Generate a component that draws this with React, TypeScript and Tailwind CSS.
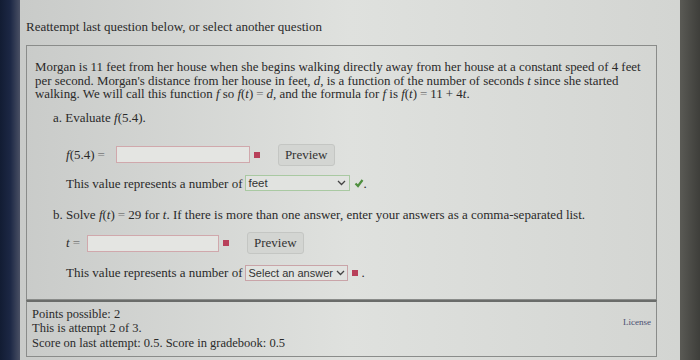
import React from "react";

const serif = { fontFamily: '"Liberation Serif", "Times New Roman", serif' };
const sans = { fontFamily: '"Liberation Sans", Arial, sans-serif' };

function Req() {
  return <span className="mx-[4px] inline-block h-[6px] w-[6px] bg-[#b8405a]" />;
}

function Check() {
  return (
    <svg width="10" height="10" viewBox="0 0 10 10" className="ml-[4px] inline-block">
      <path d="M1.5 5.5 L4 8 L8.5 2" fill="none" stroke="#4f8f3f" strokeWidth="2.2" />
    </svg>
  );
}

function Chevron() {
  return (
    <svg width="9" height="6" viewBox="0 0 9 6" className="shrink-0">
      <path d="M1 1 L4.5 4.5 L8 1" fill="none" stroke="#444" strokeWidth="1.3" />
    </svg>
  );
}

function PreviewButton() {
  return (
    <button
      className="ml-[14px] h-[22px] rounded-[3px] border border-[#c4c6c3] bg-[#d3d5d2] px-[6px] text-[13px] text-[#333]"
      style={serif}
    >
      Preview
    </button>
  );
}

function Select({ label, ok }: { label: string; ok: boolean }) {
  return (
    <span
      className={
        "inline-flex h-[16px] items-center justify-between gap-[3px] whitespace-nowrap border bg-[#e1e3e0] px-[3px] text-[#333] " +
        (ok ? "w-[105px] border-[#a9c9a2] text-[11.5px]" : "w-[103px] border-[#c9a4a8] text-[11px]")
      }
      style={sans}
    >
      <span>{label}</span>
      <Chevron />
    </span>
  );
}

function M({ children }: { children: React.ReactNode }) {
  return <i>{children}</i>;
}

function Eq() {
  return <span className="mx-[3px] text-[#777]">=</span>;
}

export default function App() {
  return (
    <div className="flex h-[360px] w-[700px] overflow-hidden" style={serif}>
      <div className="w-[20px] bg-gradient-to-r from-[#121c33] via-[#1c2744] to-[#4a5064]" />
      <div className="flex flex-1 flex-col bg-gradient-to-r from-[#c9cbc9] via-[#dfe1de] to-[#d3d5d2] pl-[6px] pr-[23px] text-[#2a2a2a]">
        <div className="pt-[19px] text-[13px] leading-[15px]">
          Reattempt last question below, or select another question
        </div>
        <div className="mt-[11px] border border-[#8a8c8a] pb-[16px] pl-[8px] pr-[10px] pt-[15px]">
          <div className="text-[12.9px] leading-[13.5px]">
            Morgan is 11 feet from her house when she begins walking directly away from her house at a constant speed of 4 feet
            <br />
            per second. Morgan's distance from her house in feet, <M>d</M>, is a function of the number of seconds <M>t</M> since she started
            <br />
            walking. We will call this function <M>f</M> so <M>f</M>(<M>t</M>)<Eq /><M>d</M>, and the formula for <M>f</M> is <M>f</M>(<M>t</M>)<Eq />11 + 4<M>t</M>.
          </div>
          <div className="ml-[18px] mt-[8px] text-[13px] leading-[15px]">
            a. Evaluate <M>f</M>(5.4).
          </div>
          <div className="ml-[31px] mt-[19px] flex items-center text-[13px]">
            <span>
              <M>f</M>(5.4)<Eq />
            </span>
            <span className="ml-[8px] h-[17px] w-[134px] border border-[#d0a8ac] bg-[#e4e5e2]" />
            <Req />
            <PreviewButton />
          </div>
          <div className="ml-[31px] mt-[8px] flex items-center text-[13px]">
            <span className="mr-[2px]">This value represents a number of</span>
            <Select label="feet" ok />
            <Check />
            <span>.</span>
          </div>
          <div className="ml-[18px] mt-[14px] text-[13px] leading-[15px]">
            b. Solve <M>f</M>(<M>t</M>)<Eq />29 for <M>t</M>. If there is more than one answer, enter your answers as a comma-separated list.
          </div>
          <div className="ml-[31px] mt-[10px] flex items-center text-[13px]">
            <span>
              <M>t</M>
              <Eq />
            </span>
            <span className="ml-[4px] h-[17px] w-[132px] border border-[#d0a8ac] bg-[#e4e5e2]" />
            <Req />
            <PreviewButton />
          </div>
          <div className="ml-[31px] mt-[9px] flex items-center text-[13px]">
            <span className="mr-[2px]">This value represents a number of</span>
            <Select label="Select an answer" ok={false} />
            <Req />
            <span>.</span>
          </div>
        </div>
        <div className="flex border-x border-b border-t-2 border-[#8a8c8a] border-t-[#6a6c6a] px-[5px] pb-[6px] pt-[5px]">
          <div className="flex-1 text-[12.5px] leading-[14.5px]">
            <div>Points possible: 2</div>
            <div>This is attempt 2 of 3.</div>
            <div>Score on last attempt: 0.5. Score in gradebook: 0.5</div>
          </div>
          <div className="pt-[9px] text-[9px] text-[#4a4e70]">License</div>
        </div>
      </div>
      <div className="w-[20px] bg-gradient-to-r from-[#5a5a55] to-[#3e3e3a]" />
    </div>
  );
}
